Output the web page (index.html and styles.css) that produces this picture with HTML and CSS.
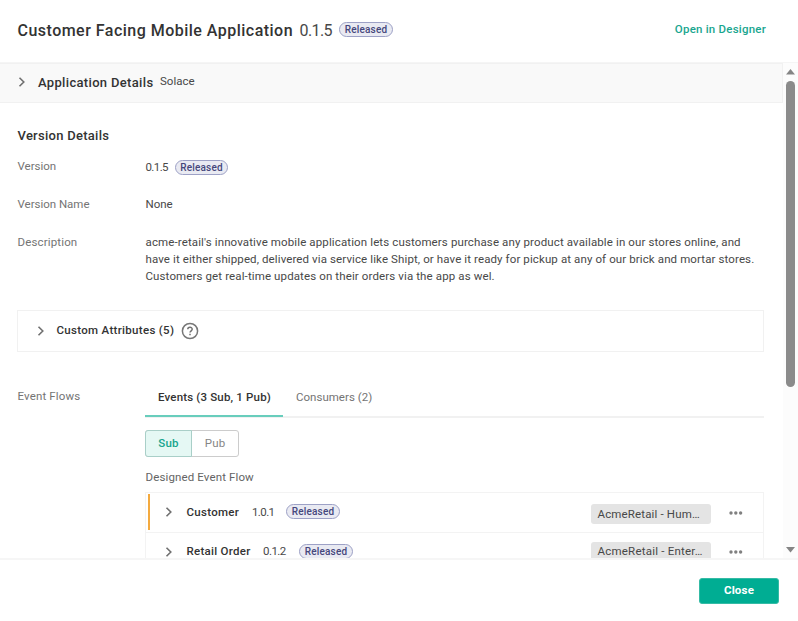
FILE: index.html
```html
<!DOCTYPE html>
<html lang="en">
<head>
<meta charset="utf-8">
<title>Customer Facing Mobile Application</title>
<link rel="stylesheet" href="styles.css">
</head>
<body>
<svg class="defs" aria-hidden="true">
  <symbol id="chevron" viewBox="0 0 8 12"><path d="M1.5 1.7 5.8 6 1.5 10.3" fill="none" stroke="#707070" stroke-width="1.6"/></symbol>
  <symbol id="dots" viewBox="0 0 14 4"><g fill="#808080"><circle cx="2" cy="2" r="1.7"/><circle cx="6.8" cy="2" r="1.7"/><circle cx="11.6" cy="2" r="1.7"/></g></symbol>
</svg>
<div class="dialog">
  <header class="header">
    <h1 class="title">Customer Facing Mobile Application</h1>
    <span class="title-version">0.1.5</span>
    <span class="badge">Released</span>
    <a class="designer-link">Open in Designer</a>
  </header>
  <div class="body">
    <main class="content">
      <section class="app-details">
        <svg class="chevron"><use href="#chevron"/></svg>
        <h2 class="app-heading">Application Details</h2>
        <span class="domain">Solace</span>
      </section>
      <div class="details">
        <h2 class="version-heading">Version Details</h2>
        <div class="field version-field">
          <span class="label l-version">Version</span>
          <div class="value version-value"><span class="num">0.1.5</span><span class="badge">Released</span></div>
        </div>
        <div class="field name-field">
          <span class="label l-version">Version Name</span>
          <span class="value">None</span>
        </div>
        <div class="field description-field">
          <span class="label">Description</span>
          <p class="value description"><span class="line1">acme-retail's innovative mobile application lets customers purchase any product available in our stores online, and</span><br><span class="line2">have it either shipped, delivered via service like Shipt, or have it ready for pickup at any of our brick and mortar stores.</span><br><span class="line3">Customers get real-time updates on their orders via the app as wel.</span></p>
        </div>
        <div class="attributes">
          <svg class="chevron"><use href="#chevron"/></svg>
          <span class="attributes-name">Custom Attributes (5)</span>
          <svg class="help" viewBox="0 0 18 18"><circle cx="9" cy="9" r="7.6" fill="none" stroke="#777" stroke-width="1.5"/><path d="M6.8 7.3C6.8 4.6 11.2 4.6 11.2 7.2 11.2 8.8 9 8.8 9 10.6M9 11.8V13.3" fill="none" stroke="#707070" stroke-width="1.5"/></svg>
        </div>
        <div class="field flows-field">
          <span class="label l-flows">Event Flows</span>
          <div class="flows">
            <nav class="tabs">
              <span class="tab active">Events (3 Sub, 1 Pub)</span>
              <span class="tab">Consumers (2)</span>
            </nav>
            <div class="toggle"><span class="option selected">Sub</span><span class="option pub">Pub</span></div>
            <div class="flow-title">Designed Event Flow</div>
            <div class="events">
              <div class="event highlighted">
                <svg class="chevron"><use href="#chevron"/></svg>
                <span class="event-name customer">Customer</span><span class="event-version">1.0.1</span><span class="badge">Released</span>
                <span class="chip hum">AcmeRetail - Hum…</span><svg class="dots"><use href="#dots"/></svg>
              </div>
              <div class="event">
                <svg class="chevron"><use href="#chevron"/></svg>
                <span class="event-name order">Retail Order</span><span class="event-version">0.1.2</span><span class="badge">Released</span>
                <span class="chip enter">AcmeRetail - Enter…</span><svg class="dots"><use href="#dots"/></svg>
              </div>
            </div>
          </div>
        </div>
      </div>
    </main>
    <div class="scrollbar">
      <svg class="arrow" viewBox="0 0 9 6"><path d="M0 5.5 4.5 0 9 5.5z"/></svg>
      <div class="thumb"></div>
      <svg class="arrow down" viewBox="0 0 9 6"><path d="M0 0H9L4.5 5.5z"/></svg>
    </div>
  </div>
  <footer class="footer"><button class="close">Close</button></footer>
</div>
</body>
</html>
```

FILE: styles.css
```css
* { box-sizing: border-box; }
body { margin: 0; background: #fff; color: #484848; font: 11.5px/17px Roboto, "Liberation Sans", sans-serif; }
h1, h2, p { margin: 0; font-weight: 500; }
.defs { position: absolute; width: 0; height: 0; }
.dialog { width: 798px; height: 621px; display: flex; flex-direction: column; overflow: hidden; white-space: nowrap; }
.header { height: 62px; flex: none; display: flex; padding: 0 32px 0 17.5px; }
.title { width: 282px; margin-top: 20px; font-size: 16px; line-height: 21px; color: #333; letter-spacing: .48px; }
.title-version { width: 39.5px; margin-top: 20px; font-size: 16px; line-height: 21px; letter-spacing: -.6px; }
.badge { flex: none; width: 54px; height: 15px; border: 1px solid #9da1c6; border-radius: 8px; background: #e9eaf2; color: #45477c; font-size: 10px; line-height: 13px; font-weight: 500; text-align: center; letter-spacing: .2px; }
.header .badge { margin-top: 22px; }
.designer-link { margin: 21px 0 0 auto; color: #19a68f; font-weight: 500; letter-spacing: .22px; }
.body { height: 498px; flex: none; display: flex; border-top: 1px solid #f5f5f5; border-bottom: 2px solid #f6f6f6; overflow: hidden; }
.content { width: 783px; flex: none; }
.chevron { width: 8px; height: 12px; flex: none; }
.app-details { height: 40px; display: flex; background: #f9f9f9; border: 1px solid #f1f1f1; border-left: 0; padding-left: 18px; }
.app-details .chevron { margin: 12px 12px 0 0; }
.app-heading { width: 122px; margin-top: 9px; font-size: 13px; line-height: 19px; color: #333; letter-spacing: .33px; }
.domain { margin-top: 9px; letter-spacing: .02px; }
.details { padding: 23px 19px 0 17px; }
.version-heading { height: 19px; padding-left: .5px; font-size: 13px; line-height: 19px; color: #333; letter-spacing: .27px; }
.field { display: flex; }
.label { width: 128.5px; padding-left: .5px; flex: none; color: #747474; letter-spacing: .15px; }
.l-version { letter-spacing: -.02px; }
.version-field { margin-top: 13px; height: 38px; }
.version-value { display: flex; padding-top: 1px; }
.num { width: 29.5px; letter-spacing: -.6px; }
.version-value .badge { width: 53px; margin-top: 1px; }
.name-field { height: 38px; }
.description-field { height: 76px; }
.description { font-weight: 400; }
.line1 { letter-spacing: .125px; }
.line2 { letter-spacing: .11px; }
.line3 { letter-spacing: .12px; }
.attributes { height: 42px; display: flex; border: 1px solid #f1f1f1; padding-left: 19px; }
.attributes .chevron { margin: 14px 11.5px 0 0; }
.attributes-name { width: 124.5px; margin-top: 11px; font-weight: 500; color: #333; letter-spacing: .31px; }
.help { width: 18px; height: 18px; margin-top: 11px; flex: none; }
.flows-field { margin-top: 28px; }
.l-flows { width: 128px; padding-top: 8px; }
.flows { width: 619px; }
.tabs { height: 38px; display: flex; border-bottom: 2px solid #f1f1f1; }
.tab { height: 37px; padding: 9px 13px 0; color: #747474; letter-spacing: .02px; }
.active { width: 138px; color: #333; font-weight: 500; border-bottom: 2px solid #68cdbc; letter-spacing: .17px; }
.toggle { display: flex; margin-top: 12px; width: 94px; height: 27px; border: 1px solid #ccc; border-radius: 3px; line-height: 25px; text-align: center; }
.option { flex: 1; color: #858585; letter-spacing: .15px; }
.selected { flex: none; width: 47px; margin: -1px 0 -1px -1px; border: 1px solid #a9cfc8; border-radius: 3px 0 0 3px; background: #e5f8f4; color: #16a58d; font-weight: 500; }
.flow-title { height: 23px; margin-top: 12px; padding-left: .5px; color: #646464; letter-spacing: .13px; }
.events { border: 1px solid #f3f3f3; border-bottom: 0; }
.event { height: 39px; display: flex; padding-left: 19px; }
.event + .event { border-top: 1px solid #f3f3f3; }
.highlighted { position: relative; }
.highlighted::before { content: ""; position: absolute; left: 2px; top: 1px; width: 2px; height: 36px; background: #f4aa3f; }
.event .chevron { margin: 13px 13.5px 0 0; }
.event-name { margin-top: 11px; font-weight: 500; color: #333; letter-spacing: .27px; }
.customer { width: 65.5px; letter-spacing: .3px; }
.order { width: 76.5px; }
.event-version { width: 34px; margin-top: 11px; letter-spacing: -.6px; }
.event + .event .event-version { width: 36px; letter-spacing: -.55px; }
.event + .event .event-name, .event + .event .event-version { margin-top: 10px; }
.event .badge { margin-top: 11px; }
.chip { width: 120px; height: 20px; margin: 11px 18px 0 auto; padding-left: 6.5px; border-radius: 3px; background: #e4e4e4; line-height: 20px; letter-spacing: .15px; }
.enter { margin-top: 9px; line-height: 18px; letter-spacing: .22px; }
.dots { width: 14px; height: 4px; margin: 18px 20px 0 0; flex: none; }
.event + .event .dots { margin-top: 17px; }
.scrollbar { width: 15px; background: #fcfcfc; display: flex; flex-direction: column; align-items: center; }
.arrow { width: 9px; height: 6px; margin-top: 6px; fill: #858585; flex: none; }
.thumb { width: 9px; height: 306px; margin-top: 6px; border-radius: 5px; background: #8b8b8b; flex: none; }
.down { margin: auto 0 5px; }
.footer { height: 61px; padding: 18px 19px 0 0; text-align: right; }
.close { width: 80px; height: 26px; padding: 0 0 2px; border: 1px solid #35bba5; border-radius: 3px; background: #00ad93; color: #fff; font: 700 11.5px/22px Roboto, sans-serif; letter-spacing: .2px; }
```
